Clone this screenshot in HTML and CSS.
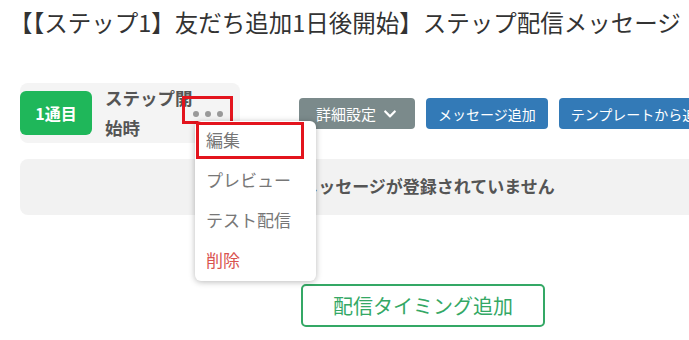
FILE: index.html
```html
<!DOCTYPE html>
<html lang="ja">
<head>
    <meta charset="UTF-8">
    <meta name="viewport" content="width=device-width, initial-scale=1.0">
    <title>ステップ配信メッセージ</title>
    <link rel="stylesheet" href="styles.css">
</head>
<body>
    <h1 class="page-title">【【ステップ1】友だち追加1日後開始】ステップ配信メッセージ</h1>
    <div class="container">
        <div class="step-row">
            <div class="step-card">
                <div class="step-badge">1通目</div>
                <div class="step-name">ステップ開始時</div>
                <button class="dots-btn"><span></span><span></span><span></span></button>
                <ul class="menu">
                    <li class="menu-item">編集<span class="mark"></span></li>
                    <li class="menu-item">プレビュー</li>
                    <li class="menu-item">テスト配信</li>
                    <li class="menu-item danger">削除</li>
                </ul>
            </div>
            <div class="actions">
                <button class="btn btn-gray">詳細設定
                    <svg class="chev" viewBox="0 0 448 512"><path d="M207 381L12 186c-9-9-9-25 0-34l23-23c9-9 24-9 34 0l155 155 155-155c10-9 25-9 34 0l23 23c9 9 9 25 0 34L241 381c-9 9-25 9-34 0z" fill="#fff"/></svg>
                </button>
                <button class="btn btn-blue">メッセージ追加</button>
                <button class="btn btn-blue">テンプレートから追加</button>
            </div>
        </div>
        <div class="empty-box">メッセージが登録されていません</div>
        <div class="timing-wrap">
            <button class="btn-timing">配信タイミング追加</button>
        </div>
    </div>
</body>
</html>
```

FILE: styles.css
```css
body {
    margin: 0;
    width: 689px;
    height: 340px;
    overflow: hidden;
    background: #fff;
    font-family: "Noto Sans CJK JP", "Noto Sans", sans-serif;
    color: #333;
}
.page-title {
    margin: 0;
    padding: 5px 0 0 9px;
    font-size: 23.5px;
    font-weight: normal;
    line-height: 34px;
    white-space: nowrap;
}
.container {
    margin: 44px 0 0 20px;
    width: 816px;
}
.step-row {
    display: flex;
    align-items: flex-start;
}
.step-card {
    position: relative;
    display: flex;
    align-items: center;
    width: 220px;
    height: 60px;
    background: #f4f4f4;
    border-radius: 8px;
}
.step-badge {
    width: 72px;
    height: 44px;
    display: flex;
    align-items: center;
    justify-content: center;
    background: #1fb75a;
    color: #fff;
    font-weight: bold;
    font-size: 16px;
    border-radius: 6px;
}
.step-name {
    width: 90px;
    margin-left: 13px;
    font-size: 17.5px;
    font-weight: bold;
    line-height: 30px;
    color: #555;
}
.dots-btn {
    position: absolute;
    left: 162px;
    top: 13px;
    width: 51px;
    height: 28px;
    padding: 0 0 4px;
    display: flex;
    align-items: flex-end;
    justify-content: center;
    gap: 6px;
    background: transparent;
    border: 3px solid #e3141d;
    box-sizing: border-box;
}
.dots-btn span {
    width: 6px;
    height: 6px;
    border-radius: 50%;
    background: #999;
}
.menu {
    position: absolute;
    left: 175px;
    top: 38px;
    width: 121px;
    margin: 0;
    padding: 0;
    list-style: none;
    background: #fff;
    border-radius: 6px;
    box-shadow: 0 1px 6px rgba(0, 0, 0, 0.28);
    z-index: 2;
}
.menu-item {
    position: relative;
    height: 40px;
    line-height: 38px;
    padding-left: 11px;
    font-size: 17px;
    color: #777;
}
.menu-item.danger {
    color: #d9534f;
}
.mark {
    position: absolute;
    left: 1px;
    top: 1px;
    width: 108px;
    height: 37px;
    border: 3px solid #e3141d;
    box-sizing: border-box;
}
.actions {
    display: flex;
    gap: 11px;
    margin: 15px 0 0 59px;
}
.btn {
    height: 31px;
    padding: 0 12px;
    display: flex;
    align-items: center;
    gap: 7px;
    border: none;
    border-radius: 4px;
    color: #fff;
    font-family: inherit;
    font-size: 14px;
    white-space: nowrap;
}
.btn-gray {
    background: #7b8a8b;
    font-size: 15px;
    padding: 0 18px 0 17px;
}
.btn-blue {
    background: #337ab7;
}
.chev {
    width: 14px;
    height: 14px;
}
.empty-box {
    margin-top: 16px;
    height: 56px;
    display: flex;
    align-items: center;
    justify-content: center;
    padding-bottom: 3px;
    box-sizing: border-box;
    background: #f2f2f2;
    border-radius: 8px;
    font-size: 17px;
    font-weight: bold;
    color: #555;
}
.timing-wrap {
    display: flex;
    justify-content: center;
    padding-right: 10px;
    margin-top: 69px;
}
.btn-timing {
    width: 244px;
    height: 43px;
    background: #fff;
    border: 2px solid #34a865;
    border-radius: 5px;
    color: #34a865;
    font-family: inherit;
    font-size: 20px;
}
```
